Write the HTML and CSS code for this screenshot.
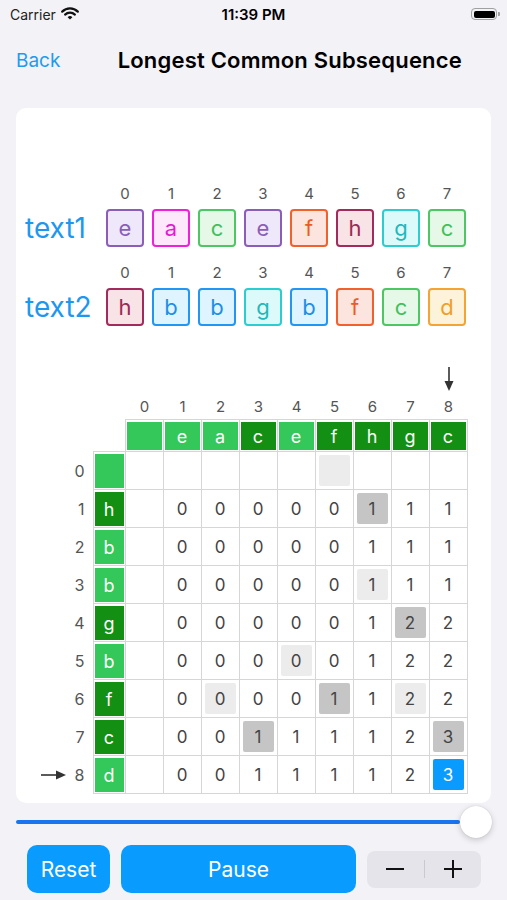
FILE: index.html
```html
<!DOCTYPE html>
<html lang="en">
<head>
  <meta charset="UTF-8" />
  <title>Longest Common Subsequence</title>
  <link rel="stylesheet" href="styles.css">
</head>
<body>
  <div class="status-bar">
    <div class="carrier">
      Carrier
      <svg class="wifi" width="18" height="13" viewBox="0 0 18 13">
        <path d="M1.2 4.6 A11 11 0 0 1 16.8 4.6" fill="none" stroke="#111" stroke-width="2.2" stroke-linecap="round"/>
        <path d="M4.1 7.6 A7 7 0 0 1 13.9 7.6" fill="none" stroke="#111" stroke-width="2.2" stroke-linecap="round"/>
        <path d="M9 12.6 L6.6 10.2 A3.4 3.4 0 0 1 11.4 10.2 Z" fill="#111"/>
      </svg>
    </div>
    <div class="clock">11:39 PM</div>
    <div class="battery-wrap">
      <div class="battery"><span class="battery-fill"></span></div>
      <span class="battery-nub"></span>
    </div>
  </div>

  <div class="nav">
    <a class="back">Back</a>
    <h1>Longest Common Subsequence</h1>
  </div>

  <div class="card">
    <div class="seq" id="seq1"><span class="seq-label">text1</span></div>
    <div class="seq" id="seq2"><span class="seq-label">text2</span></div>
    <div class="grid" id="grid"></div>
  </div>

  <div class="slider">
    <div class="track"></div>
    <div class="thumb"></div>
  </div>

  <div class="controls">
    <button class="btn reset">Reset</button>
    <button class="btn pause">Pause</button>
    <div class="stepper">
      <span class="step-btn">
        <svg width="18" height="18" viewBox="0 0 18 18"><line x1="0" y1="9" x2="18" y2="9" stroke="#111" stroke-width="2"/></svg>
      </span>
      <i></i>
      <span class="step-btn">
        <svg width="18" height="18" viewBox="0 0 18 18"><line x1="0" y1="9" x2="18" y2="9" stroke="#111" stroke-width="2"/><line x1="9" y1="0" x2="9" y2="18" stroke="#111" stroke-width="2"/></svg>
      </span>
    </div>
  </div>

  <script>
    const text1 = "eacefhgc";
    const text2 = "hbbgbfcd";

    const palette = {
      e: "purple", a: "magenta", c: "green", f: "orange",
      h: "crimson", g: "teal", b: "blue", d: "amber"
    };

    // cells picked out on the current step
    const marks = {
      "1,6": "dark", "4,7": "dark", "6,5": "dark", "7,3": "dark", "7,8": "dark",
      "0,5": "light", "3,6": "light", "5,4": "light", "6,2": "light", "6,7": "light",
      "8,8": "current"
    };

    const downArrow = '<svg width="12" height="24" viewBox="0 0 12 24"><line x1="6" y1="0" x2="6" y2="16" stroke="#333" stroke-width="1.6"/><polygon points="1.5,14 10.5,14 6,24" fill="#333"/></svg>';
    const rightArrow = '<svg width="26" height="12" viewBox="0 0 26 12"><line x1="0" y1="6" x2="17" y2="6" stroke="#333" stroke-width="1.6"/><polygon points="15,1.5 15,10.5 25,6" fill="#333"/></svg>';

    function renderSequence(id, text) {
      const row = document.getElementById(id);
      text.split("").forEach((ch, i) => {
        const col = document.createElement("div");
        col.className = "seq-col";
        col.innerHTML = `
          <span class="seq-idx">${i}</span>
          <span class="seq-box box-${palette[ch]}">${ch}</span>
        `;
        row.appendChild(col);
      });
    }

    function buildTable() {
      const dp = [];
      for (let r = 0; r <= text2.length; r++) {
        dp.push([]);
        for (let c = 0; c <= text1.length; c++) {
          if (r === 0 || c === 0) dp[r][c] = 0;
          else if (text2[r - 1] === text1[c - 1]) dp[r][c] = dp[r - 1][c - 1] + 1;
          else dp[r][c] = Math.max(dp[r - 1][c], dp[r][c - 1]);
        }
      }
      return dp;
    }

    function renderGrid() {
      const grid = document.getElementById("grid");
      const dp = buildTable();

      function cell(cls, html) {
        const div = document.createElement("div");
        div.className = cls;
        div.innerHTML = html === undefined ? "" : html;
        grid.appendChild(div);
      }

      function chip(ch, other) {
        const tone = ch && other.includes(ch) ? "dark" : "lite";
        return `<span class="chip ${tone}">${ch}</span>`;
      }

      for (let i = 0; i < 10; i++) cell("");
      cell("arrow-down", downArrow);

      cell(""); cell("");
      for (let c = 0; c <= 8; c++) cell("col-index", c);

      cell(""); cell("bd");
      for (let c = 0; c <= 8; c++) {
        cell("bd bt head", chip(c ? text1[c - 1] : "", text2));
      }

      for (let r = 0; r <= 8; r++) {
        cell("row-index", (r === 8 ? rightArrow : "") + `<span>${r}</span>`);
        cell("bd bl head", chip(r ? text2[r - 1] : "", text1));
        for (let c = 0; c <= 8; c++) {
          const val = r && c ? dp[r][c] : "";
          const mark = marks[r + "," + c] || "";
          cell("bd", `<span class="num ${mark}">${val}</span>`);
        }
      }
    }

    renderSequence("seq1", text1);
    renderSequence("seq2", text2);
    renderGrid();
  </script>
</body>
</html>
```

FILE: styles.css
```css
* {
  box-sizing: border-box;
}
body {
  margin: 0;
  background: #f2f2f7;
  font-family: "Inter", "Noto Sans", sans-serif;
  color: #000;
}

/* status bar */
.status-bar {
  display: grid;
  grid-template-columns: 1fr auto 1fr;
  align-items: center;
  height: 28px;
  font-size: 14px;
}
.carrier {
  display: flex;
  align-items: center;
  gap: 5px;
  padding-left: 10px;
  color: #222;
}
.wifi {
  margin-top: -1px;
}
.clock {
  font-size: 15px;
  font-weight: 600;
}
.battery-wrap {
  display: flex;
  justify-content: flex-end;
  align-items: center;
  padding-right: 7px;
}
.battery {
  width: 26px;
  height: 12px;
  border: 1px solid #a0a0a0;
  border-radius: 4px;
  padding: 1.5px;
}
.battery-fill {
  display: block;
  height: 100%;
  background: #000;
  border-radius: 2px;
}
.battery-nub {
  width: 2px;
  height: 4px;
  background: #a0a0a0;
  border-radius: 0 1px 1px 0;
  margin-left: 1px;
}

/* nav */
.nav {
  display: flex;
  justify-content: space-between;
  align-items: center;
  height: 64px;
  padding: 0 45px 0 16px;
}
.back {
  color: #1e9bf0;
  font-size: 19px;
}
.nav h1 {
  margin: 0;
  font-size: 22px;
  font-weight: 600;
  letter-spacing: 0.2px;
}

/* card */
.card {
  margin: 16px 16px 0;
  background: #fff;
  border-radius: 10px;
  padding: 77px 0 9px;
}
.seq {
  display: flex;
  align-items: flex-end;
  gap: 8px;
  padding-left: 9px;
}
.seq + .seq {
  margin-top: 17px;
}
.seq-label {
  width: 73px;
  line-height: 38px;
  font-size: 28px;
  color: #1c98f0;
}
.seq-col {
  display: flex;
  flex-direction: column;
  align-items: center;
}
.seq-idx {
  font-size: 15px;
  line-height: 18px;
  color: #555;
  margin-bottom: 6px;
}
.seq-box {
  width: 38px;
  height: 38px;
  border: 2px solid;
  border-radius: 4px;
  display: flex;
  align-items: center;
  justify-content: center;
  font-size: 22px;
}
.box-purple { border-color: #8b5db8; background: #efe8fa; color: #8b5db8; }
.box-magenta { border-color: #f01fdd; background: #fde8fb; color: #e619d2; }
.box-green { border-color: #4cc764; background: #e6f8e8; color: #42bf5b; }
.box-orange { border-color: #f2612b; background: #fde5df; color: #ee5a24; }
.box-crimson { border-color: #a22a5c; background: #f8e3e7; color: #9c2a55; }
.box-teal { border-color: #2ccdd0; background: #ddfafa; color: #22b7ba; }
.box-blue { border-color: #2196f3; background: #def4ff; color: #1d8fe6; }
.box-amber { border-color: #f5a433; background: #fcf3da; color: #f09f2a; }

/* dp grid */
.grid {
  display: grid;
  grid-template-columns: 53px 33px repeat(9, 38px);
  grid-template-rows: 28px 26px 33px repeat(9, 38px);
  width: 428px;
  margin: 39px auto 0;
}
.bd {
  display: flex;
  border-right: 1px solid #d6d6d6;
  border-bottom: 1px solid #d6d6d6;
  padding: 3px;
}
.bt {
  border-top: 1px solid #d6d6d6;
}
.bl {
  border-left: 1px solid #d6d6d6;
}
.head {
  padding: 2px 1px 1px;
}
.chip {
  flex: 1;
  display: flex;
  align-items: center;
  justify-content: center;
  color: #fff;
  font-size: 18px;
}
.chip.lite {
  background: #34c759;
}
.chip.dark {
  background: #139014;
}
.num {
  flex: 1;
  display: flex;
  align-items: center;
  justify-content: center;
  font-size: 17px;
  color: #444;
  border-radius: 2px;
}
.num.dark {
  background: #c5c5c5;
}
.num.light {
  background: #ececec;
}
.num.current {
  background: #0a9bff;
  color: #fff;
}
.arrow-down {
  display: flex;
  justify-content: center;
  align-items: flex-end;
  padding-bottom: 2px;
}
.col-index {
  display: flex;
  justify-content: center;
  align-items: center;
  font-size: 15px;
  color: #555;
}
.row-index {
  display: flex;
  justify-content: flex-end;
  align-items: center;
  gap: 8px;
  padding-right: 8px;
  font-size: 16px;
  color: #555;
}

/* slider */
.slider {
  display: flex;
  align-items: center;
  height: 38px;
  padding: 0 15px 0 16px;
}
.track {
  flex: 1;
  height: 4px;
  background: #1a74f0;
  border-radius: 2px;
}
.thumb {
  width: 32px;
  height: 32px;
  border-radius: 50%;
  background: #fff;
  box-shadow: 0 2px 6px rgba(0, 0, 0, 0.18), 0 0 1px rgba(0, 0, 0, 0.2);
}

/* controls */
.controls {
  display: flex;
  align-items: center;
  gap: 11px;
  margin-top: 4px;
  padding: 0 26px 0 27px;
}
.btn {
  height: 48px;
  border: none;
  border-radius: 10px;
  background: #0a9bff;
  color: #fff;
  font-family: inherit;
  font-size: 21px;
}
.reset {
  width: 83px;
}
.pause {
  flex: 1;
}
.stepper {
  display: flex;
  align-items: center;
  width: 114px;
  height: 37px;
  border-radius: 8px;
  background: #e4e4ea;
}
.step-btn {
  flex: 1;
  display: flex;
  justify-content: center;
  align-items: center;
}
.stepper i {
  width: 1px;
  height: 18px;
  background: #c9c9ce;
}
```
